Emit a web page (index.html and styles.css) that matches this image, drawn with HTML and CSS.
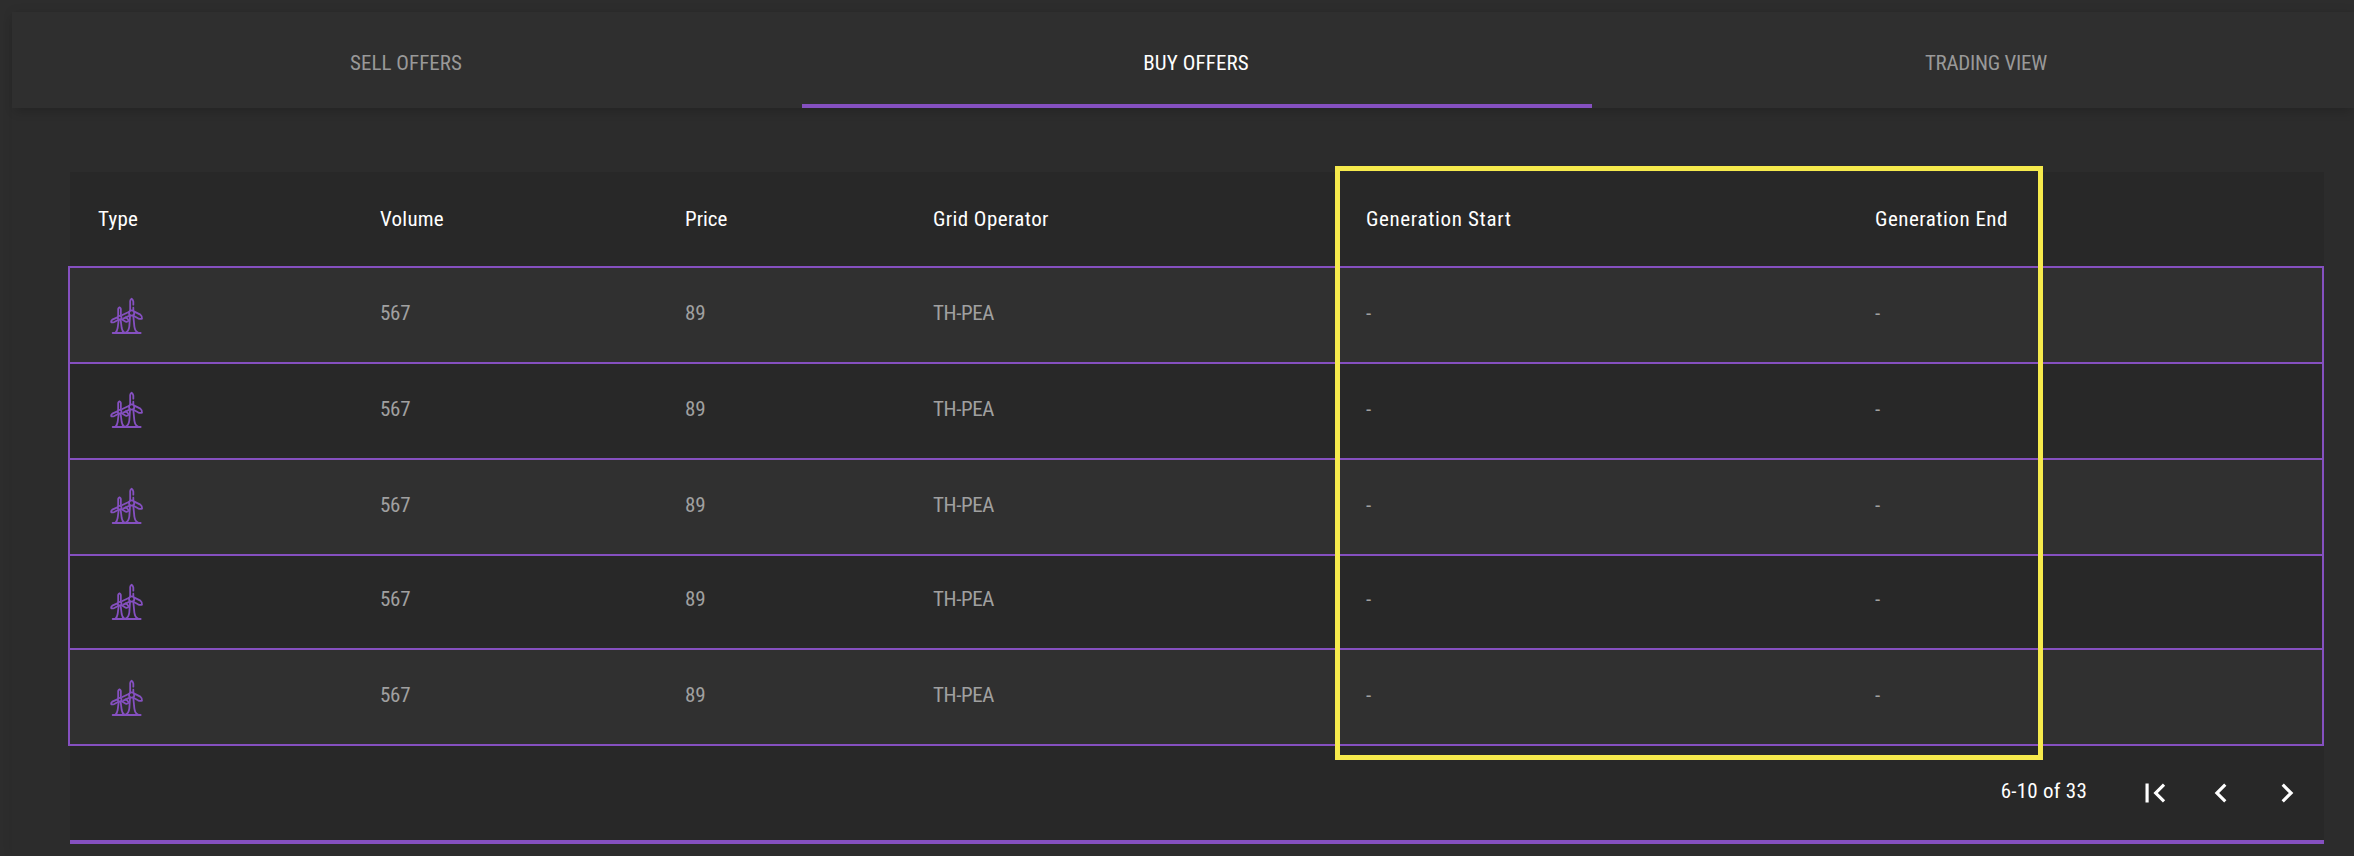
FILE: index.html
```
<!DOCTYPE html>
<html lang="en">
<head>
<meta charset="utf-8">
<title>Buy Offers</title>
<link rel="stylesheet" href="styles.css">
</head>
<body>
<svg class="defs" width="0" height="0">
  <symbol id="wind" viewBox="0 0 102 114">
    <g fill="none" stroke="currentColor" stroke-width="5.4" stroke-linejoin="round" stroke-linecap="round">
      <path d="M8 108H92"/>
      <circle cx="65" cy="48" r="8"/>
      <path d="M60.500 40V12Q61 8 65 5Q69 8 70 14V23M70 32V40"/>
      <path d="M73 44L91 53Q97 58 96 65Q90 67 84 64L70 56"/>
      <path d="M56 45L37 54M59 56L40 65"/>
      <path d="M60 57L58 88Q56 103 47 107M70 57L73 88Q75 103 84 107"/>
      <circle cx="29" cy="62" r="5.500"/>
      <path d="M24.500 56V36Q25 33 28.500 31Q32 33 32.500 36V56"/>
      <path d="M22 61L7 68Q2 72 4 76Q8 77 13 75L24 69"/>
      <path d="M34 66L47 74Q54 76 56 70Q53 64 46 61"/>
      <path d="M26 69L23 93Q21 104 16 107M32 69L35 93Q37 104 43 107"/>
    </g>
  </symbol>
</svg>
<main class="panel">
  <nav class="tabs">
    <div class="tab"><span class="sell">SELL OFFERS</span></div>
    <div class="tab active"><span class="buy">BUY OFFERS</span></div>
    <div class="tab"><span class="trading">TRADING VIEW</span></div>
  </nav>
  <section class="table">
    <div class="row head">
      <span class="type">Type</span><span class="volume">Volume</span><span>Price</span><span class="operator">Grid Operator</span><span class="start">Generation Start</span><span class="end">Generation End</span>
    </div>
    <div class="body">
      <div class="row"><svg class="wind"><use href="#wind"/></svg><span class="num">567</span><span>89</span><span class="code">TH-PEA</span><span>-</span><span>-</span></div>
      <div class="row"><svg class="wind"><use href="#wind"/></svg><span class="num">567</span><span>89</span><span class="code">TH-PEA</span><span>-</span><span>-</span></div>
      <div class="row"><svg class="wind"><use href="#wind"/></svg><span class="num">567</span><span>89</span><span class="code">TH-PEA</span><span>-</span><span>-</span></div>
      <div class="row short"><svg class="wind"><use href="#wind"/></svg><span class="num">567</span><span>89</span><span class="code">TH-PEA</span><span>-</span><span>-</span></div>
      <div class="row"><svg class="wind"><use href="#wind"/></svg><span class="num">567</span><span>89</span><span class="code">TH-PEA</span><span>-</span><span>-</span></div>
    </div>
    <footer class="pager">
      <span class="range">6-10 of 33</span>
      <svg viewBox="0 0 24 24"><path d="M18.410 16.590L13.820 12l4.590-4.590L17 6l-6 6 6 6zM6 6h2v12H6z"/></svg>
      <svg viewBox="0 0 24 24"><path d="M15.410 7.410L14 6l-6 6 6 6 1.410-1.410L10.830 12z"/></svg>
      <svg viewBox="0 0 24 24"><path d="M10 6L8.590 7.410 13.170 12l-4.580 4.590L10 18l6-6z"/></svg>
    </footer>
  </section>
</main>
<div class="highlight"></div>
</body>
</html>
```
FILE: styles.css
```
* { box-sizing: border-box; }
body {
  margin: 0;
  width: 2354px;
  height: 856px;
  padding: 12px 0 0 12px;
  overflow: hidden;
  background: #2d2d2d;
  color: #fff;
  font: 21px/24px Roboto, sans-serif;
  font-stretch: 75%;
}
.defs { position: absolute; }
.panel {
  height: 844px;
  background: #2c2c2c;
  box-shadow: 0 0 10px rgba(0, 0, 0, .08);
}
.tabs {
  display: grid;
  grid-template-columns: repeat(3, 790px);
  width: 2342px;
  height: 96px;
  background: #2f2f2f;
  box-shadow: 0 6px 10px -3px rgba(0, 0, 0, .2);
}
.tab {
  padding: 39px 2px 0 0;
  text-align: center;
  color: #999;
}
.tab.active {
  color: #fff;
  border-bottom: 4px solid #8550c0;
}
.sell { letter-spacing: .05px; }
.buy { letter-spacing: .1px; }
.trading { letter-spacing: -.25px; }
.table {
  width: 2254px;
  margin: 64px 0 0 58px;
  background: #282828;
  border-bottom: 4px solid #8550c0;
}
.row {
  display: grid;
  grid-template-columns: 282px 305px 248px 433px 509px 1fr;
  height: 96px;
  padding: 35px 0 0 28px;
}
.head { height: 94px; }
.type, .volume { letter-spacing: .25px; }
.operator { letter-spacing: .4px; }
.end { letter-spacing: .5px; }
.start { letter-spacing: .65px; }
.body {
  width: 2256px;
  margin-left: -2px;
  border: 2px solid #8550c0;
  border-top: 0;
}
.body .row {
  border-top: 2px solid #8550c0;
  padding-top: 33px;
  color: #a0a0a0;
}
.body .row:nth-child(odd) { background: #303030; }
.body .row.short { height: 94px; padding-top: 31px; }
.num { letter-spacing: -.25px; }
.code { letter-spacing: -.4px; }
.wind {
  width: 34px;
  height: 38px;
  margin: -6px 0 0 11.5px;
  color: #8550c0;
}
.body .row:first-child .wind, .body .row:last-child .wind { margin-top: -4px; }
.short .wind { margin-top: -4px; }
.pager {
  display: flex;
  justify-content: flex-end;
  gap: 28px;
  height: 94px;
  padding: 28px 18px 0 0;
}
.pager svg {
  width: 38px;
  height: 38px;
  fill: #fff;
}
.range {
  margin: 5px 21px 0 0;
  letter-spacing: .25px;
}
.highlight {
  position: absolute;
  left: 1335px;
  top: 166px;
  width: 708px;
  height: 594px;
  border: 5px solid #f6ea4c;
}
```
